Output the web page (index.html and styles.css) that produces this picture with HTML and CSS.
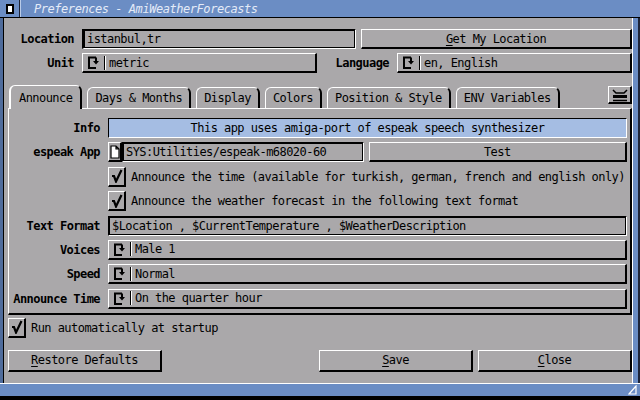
FILE: index.html
```html
<!DOCTYPE html>
<html lang="en">
<head>
    <meta charset="UTF-8">
    <title>Preferences - AmiWeatherForecasts</title>
    <link rel="stylesheet" href="styles.css">
</head>
<body>
    <div class="window">
        <div class="titlebar">
            <div class="close-gadget"><span></span></div>
            <div class="title">Preferences - AmiWeatherForecasts</div>
        </div>

        <div class="frame">
            <div class="content">
                <div class="row">
                    <span class="lbl top-lbl">Location</span>
                    <div class="string grow">istanbul,tr</div>
                    <div class="btn grow"><u>G</u>et My Location</div>
                </div>
                <div class="row">
                    <span class="lbl top-lbl">Unit</span>
                    <div class="btn cycle grow">
                        <svg class="cyc-icon" width="12" height="15" viewBox="0 0 12 15"><path d="M9 2.5H2V13H9" fill="none" stroke="#000" stroke-width="2"/><path d="M9 2.5V6" stroke="#000" stroke-width="2"/><path d="M6 6H12L9 9.5Z" fill="#000"/></svg>
                        <span class="sep"></span>metric
                    </div>
                    <span class="lbl lang-lbl">Language</span>
                    <div class="btn cycle grow">
                        <svg class="cyc-icon" width="12" height="15" viewBox="0 0 12 15"><path d="M9 2.5H2V13H9" fill="none" stroke="#000" stroke-width="2"/><path d="M9 2.5V6" stroke="#000" stroke-width="2"/><path d="M6 6H12L9 9.5Z" fill="#000"/></svg>
                        <span class="sep"></span>en, English
                    </div>
                </div>

                <div class="tabbar">
                    <div class="tab active">Announce</div>
                    <div class="tab">Days &amp; Months</div>
                    <div class="tab">Display</div>
                    <div class="tab">Colors</div>
                    <div class="tab">Position &amp; Style</div>
                    <div class="tab">ENV Variables</div>
                    <div class="btn tab-icon">
                        <svg width="18" height="14" viewBox="0 0 18 14"><path d="M2 2L5 5H13L16 2" fill="none" stroke="#000" stroke-width="1.5"/><rect x="2" y="7" width="14" height="3" fill="#000"/><path d="M2 12.5H16" stroke="#000" stroke-width="1.5"/></svg>
                    </div>
                </div>

                <div class="panel">
                    <span class="lbl">Info</span>
                    <div class="info">This app uses amiga-port of espeak speech synthesizer</div>

                    <span class="lbl">espeak App</span>
                    <div class="pair">
                        <div class="file-field">
                            <div class="btn pop">
                                <svg width="10" height="14" viewBox="0 0 10 14"><path d="M1 1H6L9 4V13H1Z M6 1V4H9" fill="#fff" stroke="#000" stroke-width="1.2"/></svg>
                            </div>
                            <div class="string grow">SYS:Utilities/espeak-m68020-60</div>
                        </div>
                        <div class="btn grow">Test</div>
                    </div>

                    <span></span>
                    <div class="check-row">
                        <div class="btn checkbox">
                            <svg width="12" height="14" viewBox="0 0 12 14"><path d="M1 7H3L5 12.5L10.5 1" fill="none" stroke="#000" stroke-width="2.2"/></svg>
                        </div>
                        Announce the time (available for turkish, german, french and english only)
                    </div>

                    <span></span>
                    <div class="check-row">
                        <div class="btn checkbox">
                            <svg width="12" height="14" viewBox="0 0 12 14"><path d="M1 7H3L5 12.5L10.5 1" fill="none" stroke="#000" stroke-width="2.2"/></svg>
                        </div>
                        Announce the weather forecast in the following text format
                    </div>

                    <span class="lbl">Text Format</span>
                    <div class="string">$Location , $CurrentTemperature , $WeatherDescription</div>

                    <span class="lbl">Voices</span>
                    <div class="btn cycle">
                        <svg class="cyc-icon" width="12" height="15" viewBox="0 0 12 15"><path d="M9 2.5H2V13H9" fill="none" stroke="#000" stroke-width="2"/><path d="M9 2.5V6" stroke="#000" stroke-width="2"/><path d="M6 6H12L9 9.5Z" fill="#000"/></svg>
                        <span class="sep"></span>Male 1
                    </div>

                    <span class="lbl">Speed</span>
                    <div class="btn cycle">
                        <svg class="cyc-icon" width="12" height="15" viewBox="0 0 12 15"><path d="M9 2.5H2V13H9" fill="none" stroke="#000" stroke-width="2"/><path d="M9 2.5V6" stroke="#000" stroke-width="2"/><path d="M6 6H12L9 9.5Z" fill="#000"/></svg>
                        <span class="sep"></span>Normal
                    </div>

                    <span class="lbl">Announce Time</span>
                    <div class="btn cycle">
                        <svg class="cyc-icon" width="12" height="15" viewBox="0 0 12 15"><path d="M9 2.5H2V13H9" fill="none" stroke="#000" stroke-width="2"/><path d="M9 2.5V6" stroke="#000" stroke-width="2"/><path d="M6 6H12L9 9.5Z" fill="#000"/></svg>
                        <span class="sep"></span>On the quarter hour
                    </div>
                </div>

                <div class="check-row startup">
                    <div class="btn checkbox">
                        <svg width="12" height="14" viewBox="0 0 12 14"><path d="M1 7H3L5 12.5L10.5 1" fill="none" stroke="#000" stroke-width="2.2"/></svg>
                    </div>
                    Run automatically at startup
                </div>

                <div class="buttons">
                    <div class="btn wide"><u>R</u>estore Defaults</div>
                    <span class="spacer"></span>
                    <div class="btn wide"><u>S</u>ave</div>
                    <div class="btn wide"><u>C</u>lose</div>
                </div>
            </div>
            <div class="rborder"></div>
        </div>

        <div class="bottom-border">
            <svg class="resize" width="9" height="10" viewBox="0 0 9 10"><path d="M1 9L8 1V9Z" fill="none" stroke="#fff" stroke-width="1.2"/></svg>
        </div>
    </div>
</body>
</html>
```

FILE: styles.css
```css
body {
    margin: 0;
    background: #000;
    font-family: "DejaVu Sans Mono", "Liberation Mono", monospace;
    font-size: 12px;
    letter-spacing: -0.55px;
    color: #000;
}
.window {
    width: 640px;
    height: 400px;
    display: flex;
    flex-direction: column;
    background: #aaa8aa;
    overflow: hidden;
}
.titlebar {
    flex: none;
    height: 17px;
    background: #6b8dc4;
    border-bottom: 1px solid #000;
    display: flex;
    align-items: center;
}
.close-gadget {
    width: 19px;
    height: 17px;
    border-right: 1px solid #1d2438;
    box-shadow: 1px 0 0 #b9cbe8;
    display: flex;
    align-items: center;
    justify-content: center;
}
.close-gadget span {
    width: 4px;
    height: 6px;
    background: #fff;
    border: 2px solid #000;
}
.title {
    margin-left: 14px;
    font-style: italic;
    color: #e4ebf8;
    letter-spacing: -0.45px;
}
.frame {
    flex: 1;
    min-height: 0;
    display: flex;
    border-left: 3px solid #4f6c9c;
}
.content {
    flex: 1;
    min-width: 0;
    border-left: 1px solid #000;
    border-right: 1px solid #fff;
    padding: 11px 0 11px 3px;
    display: flex;
    flex-direction: column;
}
.rborder {
    width: 5px;
    background: #6b8dc4;
    border-right: 2px solid #1d2438;
}
.row {
    display: flex;
    align-items: center;
    gap: 8px;
    height: 20px;
    margin-bottom: 4px;
    padding-left: 1px;
}
.row:first-child {
    gap: 5px;
}
.row:first-child .string {
    margin-left: 3px;
    border-left-width: 2px;
}
.lbl {
    font-weight: bold;
    text-align: right;
    white-space: nowrap;
    align-self: center;
}
.top-lbl {
    width: 66px;
    flex: none;
}
.lang-lbl {
    width: 64px;
    flex: none;
}
.grow {
    flex: 1 1 0;
    min-width: 0;
}
.btn {
    box-sizing: border-box;
    height: 20px;
    background: #aaa8aa;
    border-style: solid;
    border-width: 1px 2px 2px 1px;
    border-color: #fff #000 #000 #fff;
    display: flex;
    align-items: center;
    justify-content: center;
    white-space: nowrap;
}
.string {
    box-sizing: border-box;
    height: 20px;
    background: #aaa8aa;
    border: 1px solid;
    border-color: #000 #fff #fff #000;
    box-shadow: inset 1px 1px 0 #000, inset -1px -1px 0 #000;
    display: flex;
    align-items: center;
    padding-left: 3px;
    white-space: nowrap;
    overflow: hidden;
}
.cycle {
    justify-content: flex-start;
    padding-left: 4px;
}
.cyc-icon {
    flex: none;
}
.sep {
    width: 1px;
    height: 14px;
    background: #000;
    box-shadow: 1px 0 0 #fff;
    margin: 0 4px 0 5px;
}
.tabbar {
    display: flex;
    align-items: flex-end;
    gap: 5px;
    margin-top: 8px;
    padding-left: 2px;
    height: 23px;
}
.tab {
    box-sizing: border-box;
    height: 21px;
    padding: 0 7px;
    border-top: 1px solid #fff;
    border-left: 1px solid #fff;
    border-right: 2px solid #000;
    border-radius: 6px 6px 0 0;
    display: flex;
    align-items: center;
    white-space: nowrap;
}
.tab.active {
    height: 24px;
    margin-bottom: -1px;
    padding: 0 8px;
    background: #aaa8aa;
    position: relative;
    z-index: 1;
    border-left-width: 2px;
}
.tab-icon {
    width: 24px;
    height: 18px;
    margin-left: auto;
    margin-bottom: 4px;
}
.panel {
    display: grid;
    grid-template-columns: 87px 1fr;
    grid-auto-rows: 20px;
    column-gap: 8px;
    row-gap: 4.4px;
    border-style: solid;
    border-width: 1px 2px 2px 1px;
    border-color: #fff #000 #000 #fff;
    padding: 9px 3px 4px 4px;
    margin-left: 1px;
}
.info {
    background: #a5bde3;
    border: 1px solid;
    border-color: #000 #fff #fff #000;
    display: flex;
    align-items: center;
    justify-content: center;
    white-space: nowrap;
}
.pair {
    display: flex;
    gap: 5px;
}
.file-field {
    flex: 1 1 0;
    display: flex;
}
.pop {
    width: 14px;
    flex: none;
}
.check-row {
    display: flex;
    align-items: center;
    gap: 5px;
    white-space: nowrap;
}
.checkbox {
    width: 18px;
    flex: none;
}
.startup {
    height: 20px;
    margin-top: 3px;
    margin-left: 1px;
}
.buttons {
    display: flex;
    gap: 5px;
    margin-top: 12px;
    margin-left: 1px;
}
.buttons .btn {
    height: 22px;
}
.wide {
    width: 154px;
}
.spacer {
    flex: 1;
}
u {
    text-underline-offset: 2px;
}
.bottom-border {
    flex: none;
    height: 12px;
    background: #6b8dc4;
    border-top: 1px solid #fff;
    border-bottom: 4px solid #000;
    display: flex;
    justify-content: flex-end;
    align-items: center;
    padding-right: 3px;
}
```
